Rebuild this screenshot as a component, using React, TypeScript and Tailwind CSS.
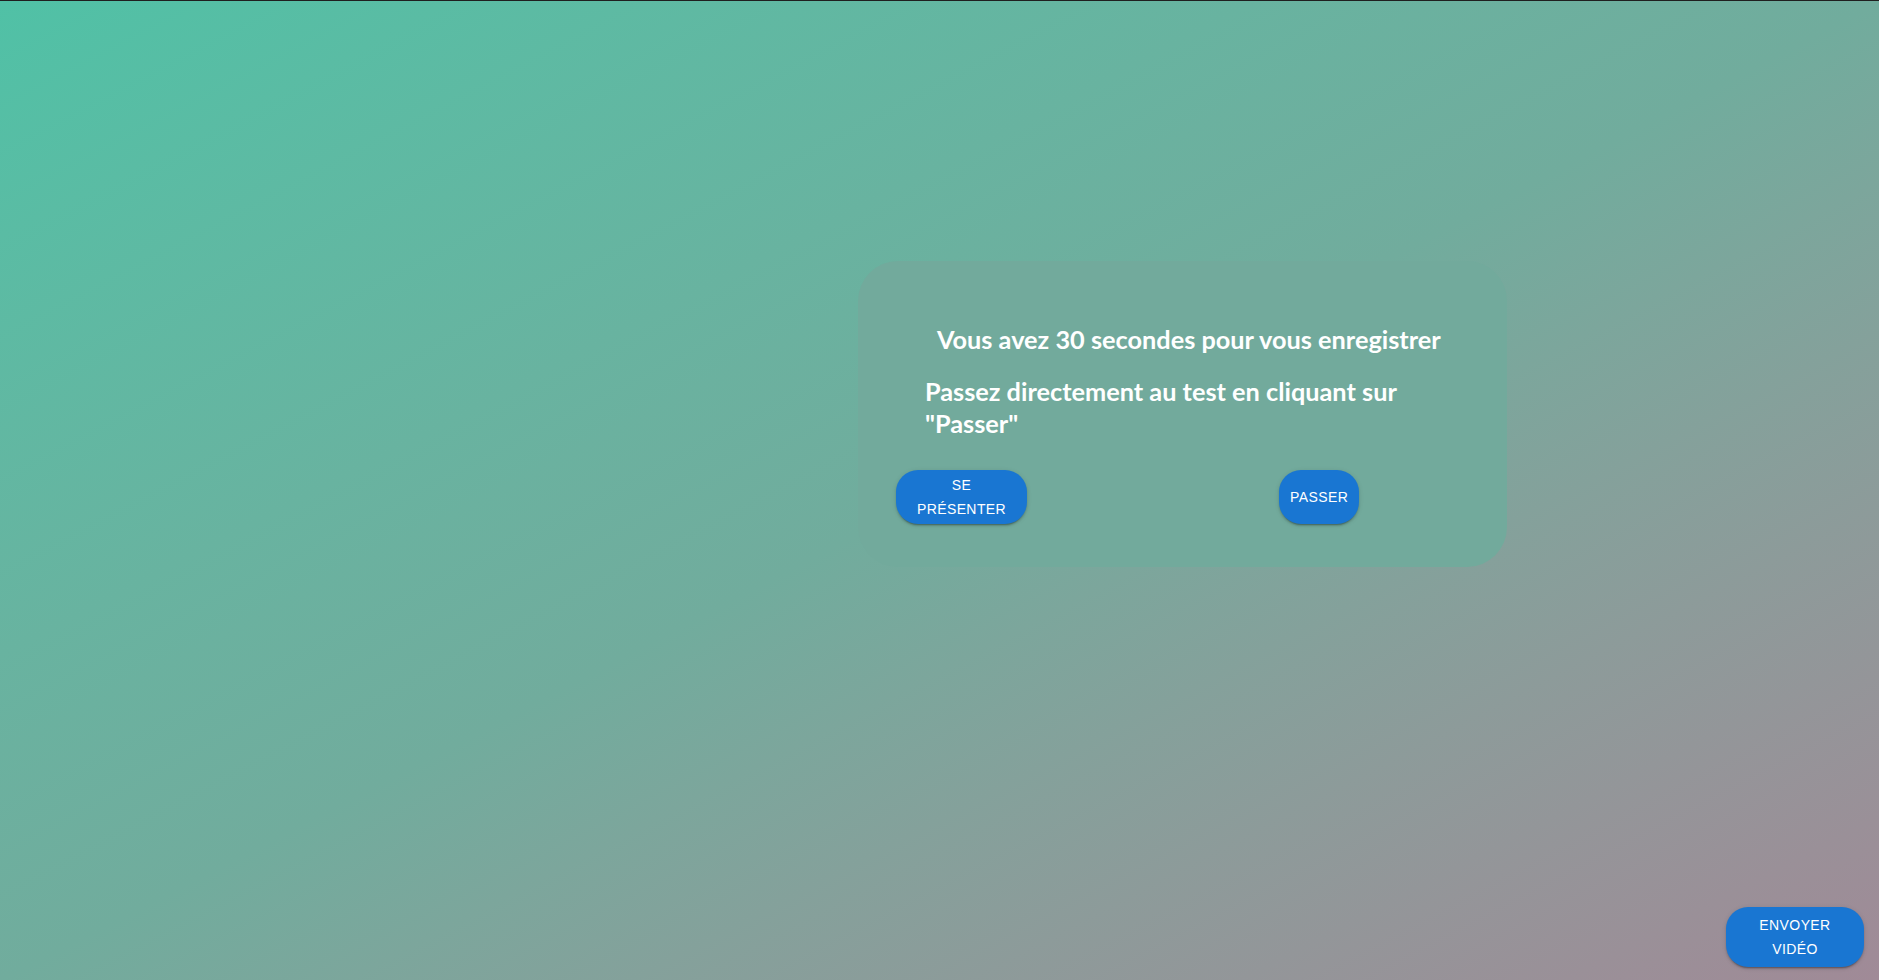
import * as React from 'react'

const btn =
  "bg-[#1976d2] text-white font-['Liberation_Sans',Arial,sans-serif] text-[14px] leading-[24px] font-normal tracking-[0.4px] uppercase rounded-[22px] shadow-[0_3px_1px_-2px_rgba(0,0,0,0.2),0_2px_2px_0_rgba(0,0,0,0.14),0_1px_5px_0_rgba(0,0,0,0.12)]"

export default function App() {
  return (
    <div className="h-[980px] w-full overflow-hidden border-t border-[#1f1f1f] bg-linear-to-br from-[#50c1a6] via-[#71ac9d] to-[#a08a97] flex flex-col">
      <div className="flex-1 pl-[858px] pt-[260px]">
        <div className="w-[649px] h-[306px] rounded-[40px] bg-[#72aa9c] pt-[62px] font-['Lato',sans-serif] text-white font-bold">
          <h2 className="pl-[79px] text-[25.3px] leading-[32px]">Vous avez 30 secondes pour vous enregistrer</h2>
          <h3 className="pl-[67px] w-[580px] mt-[20px] text-[25.3px] leading-[32.4px]">
            Passez directement au test en cliquant sur "Passer"
          </h3>
          <div className="flex items-stretch mt-[30px] pl-[38px]">
            <button className={`${btn} w-[131px] py-[3px] px-[16px]`}>Se présenter</button>
            <button className={`${btn} ml-[252px] px-[11px] py-[3px]`}>Passer</button>
          </div>
        </div>
      </div>
      <div className="flex justify-end pr-[15px] pb-[13px]">
        <button className={`${btn} w-[138px] py-[6px] px-[16px]`}>Envoyer vidéo</button>
      </div>
    </div>
  )
}
